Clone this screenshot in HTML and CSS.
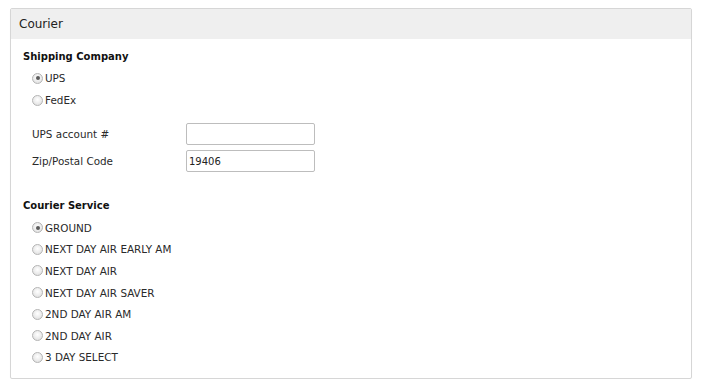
FILE: index.html
```html
<!DOCTYPE html>
<html>
<head>
<meta charset="utf-8">
<link rel="stylesheet" href="styles.css">
</head>
<body>
<div class="panel">
  <div class="panel-head">Courier</div>
  <div class="panel-body">
    <div class="section-title">Shipping Company</div>
    <label class="opt"><input type="radio" name="co" checked><span>UPS</span></label>
    <label class="opt"><input type="radio" name="co"><span>FedEx</span></label>
    <div class="fields">
      <div class="field"><span class="flabel">UPS account #</span><input class="text" type="text"></div>
      <div class="field"><span class="flabel">Zip/Postal Code</span><input class="text" type="text" value="19406"></div>
    </div>
    <div class="section-title second">Courier Service</div>
    <div class="svc">
      <label class="opt"><input type="radio" name="sv" checked><span>GROUND</span></label>
      <label class="opt"><input type="radio" name="sv"><span>NEXT DAY AIR EARLY AM</span></label>
      <label class="opt"><input type="radio" name="sv"><span>NEXT DAY AIR</span></label>
      <label class="opt"><input type="radio" name="sv"><span>NEXT DAY AIR SAVER</span></label>
      <label class="opt"><input type="radio" name="sv"><span>2ND DAY AIR AM</span></label>
      <label class="opt"><input type="radio" name="sv"><span>2ND DAY AIR</span></label>
      <label class="opt"><input type="radio" name="sv"><span>3 DAY SELECT</span></label>
    </div>
  </div>
</div>
</body>
</html>
```

FILE: styles.css
```css
html, body {
  margin: 0;
  padding: 0;
  background: #fff;
}
body {
  padding: 8px 12px 0 10px;
  font-family: "DejaVu Sans", Verdana, sans-serif;
  font-size: 10.4px;
  color: #2a2a2a;
}
.panel {
  border: 1px solid #d6d6d6;
  border-radius: 2px;
  box-shadow: 0 1px 1px rgba(0,0,0,0.04);
}
.panel-head {
  background: #efefef;
  height: 30px;
  line-height: 30px;
  padding-left: 8px;
  font-size: 12px;
  color: #222;
}
.panel-body {
  padding: 11px 12px 10px 12px;
}
.section-title {
  font-weight: bold;
  font-size: 10px;
  line-height: 14px;
  height: 14px;
  color: #111;
}
.section-title.second {
  margin-top: 27px;
}
.opt {
  display: flex;
  align-items: center;
  height: 22px;
  padding-left: 9px;
}
.svc .opt {
  height: 21.6px;
}
.section-title + .opt {
  margin-top: 3px;
}
.svc {
  margin-top: 4px;
}
.opt input {
  appearance: none;
  -webkit-appearance: none;
  width: 11px;
  height: 11px;
  margin: 0 2px 0 0;
  border: 1px solid #b4b4b4;
  border-radius: 50%;
  background: radial-gradient(circle at 50% 40%, #ffffff 0%, #e9e9e9 60%, #d8d8d8 100%);
  box-sizing: border-box;
  position: relative;
  flex: none;
}
.opt input:checked::after {
  content: "";
  position: absolute;
  left: 2.5px;
  top: 2.5px;
  width: 4px;
  height: 4px;
  border-radius: 50%;
  background: #5a5a5a;
}
.fields {
  margin-top: 12px;
  padding-left: 9px;
}
.field {
  display: flex;
  align-items: center;
  height: 22px;
}
.field + .field {
  margin-top: 5px;
}
.flabel {
  width: 154px;
  flex: none;
}
.text {
  width: 129px;
  height: 22px;
  box-sizing: border-box;
  border: 1px solid #bdbdbd;
  border-radius: 2px;
  padding: 0 2px;
  font-family: "DejaVu Sans", Verdana, sans-serif;
  font-size: 10px;
  color: #222;
  outline: none;
  margin: 0;
}
```
